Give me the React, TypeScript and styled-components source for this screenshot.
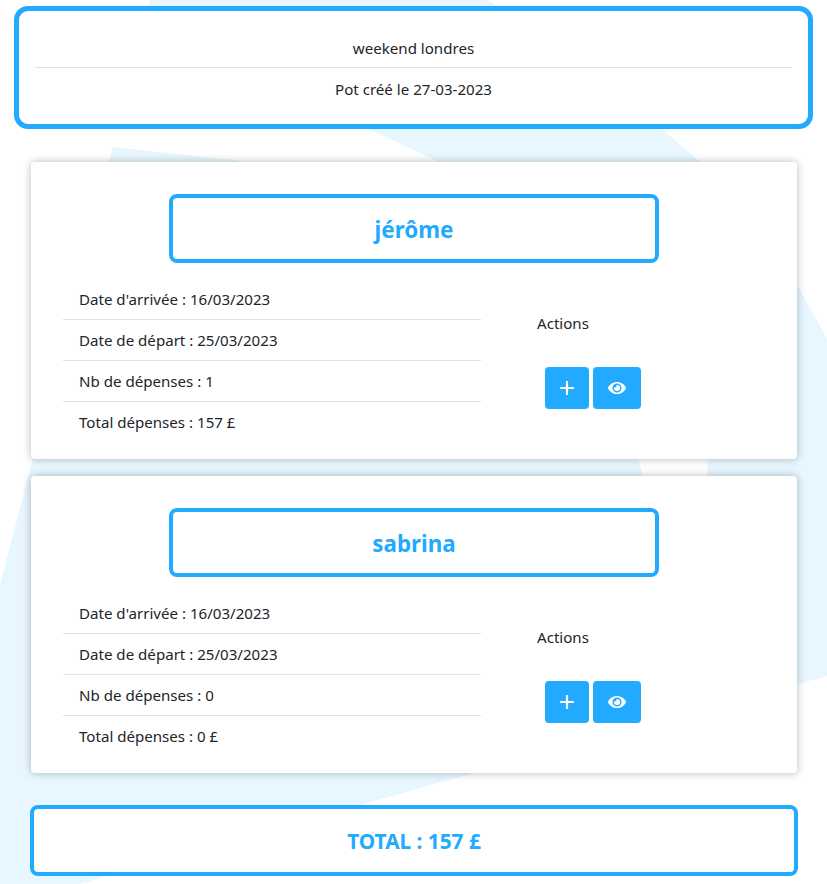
import React from "react";
import styled, { createGlobalStyle } from "styled-components";
import { FaEye } from "react-icons/fa";

const BLUE = "#22aaff";

const GlobalStyle = createGlobalStyle`
  html, body { margin: 0; padding: 0; background: #fff; }
  body {
    font-family: "Noto Sans", "Open Sans", sans-serif;
    font-size: 15.1px;
    line-height: 1.5;
    color: #212529;
  }
  * { box-sizing: border-box; }
`;

const Page = styled.div`
  position: relative;
  width: 827px;
  height: 884px;
  overflow: hidden;
  padding: 6px 14px 0;
`;

const Backdrop = styled.svg`
  position: absolute;
  inset: 0;
  width: 827px;
  height: 884px;
  z-index: 0;
`;

const Content = styled.div`
  position: relative;
  z-index: 1;
`;

const Header = styled.header`
  height: 123px;
  background: #fff;
  border: 5px solid ${BLUE};
  border-radius: 14px;
  padding: 15px 16px 0;
  text-align: center;
`;

const HeaderLine = styled.div`
  height: 41px;
  line-height: 45px;
  & + & { border-top: 1px solid #dee2e6; line-height: 42px; }
`;

const Cards = styled.main`
  margin: 33px 16px 0 17px;
  display: flex;
  flex-direction: column;
  gap: 17.5px;
`;

const Card = styled.section`
  height: 296.5px;
  background: #fff;
  border-radius: 4px;
  box-shadow: 0 0 8px rgba(0, 0, 0, 0.28);
  padding: 32px 32px 0;
`;

const NameBox = styled.h2`
  margin: 0 auto;
  width: 490px;
  height: 69px;
  border: 4px solid ${BLUE};
  border-radius: 8px;
  padding-top: 2px;
  display: flex;
  align-items: center;
  justify-content: center;
  font-size: 22.4px;
  line-height: 1.5;
  font-weight: 700;
  color: ${BLUE};
`;

const CardBody = styled.div`
  margin-top: 15px;
  display: flex;
`;

const InfoList = styled.ul`
  list-style: none;
  margin: 0;
  padding: 0;
  width: 418px;
`;

const InfoItem = styled.li`
  height: 41px;
  line-height: 43px;
  padding: 0 16px;
  & + & { border-top: 1px solid #dee2e6; line-height: 41px; }
`;

const ActionsCol = styled.div`
  margin-left: 56px;
  padding-top: 34px;
`;

const ActionsLabel = styled.div`
  line-height: 23px;
`;

const ActionButtons = styled.div`
  margin: 32px 0 0 8px;
  display: flex;
  gap: 4px;
`;

const IconButton = styled.button<{ $w: number }>`
  width: ${(p) => p.$w}px;
  height: 42px;
  border: 0;
  padding: 0;
  border-radius: 4px;
  background: ${BLUE};
  color: #fff;
  display: flex;
  align-items: center;
  justify-content: center;
`;

const TotalBox = styled.div`
  margin: 32.5px 15px 0 16px;
  height: 71px;
  background: #fff;
  border: 4px solid ${BLUE};
  border-radius: 8px;
  padding-top: 2px;
  display: flex;
  align-items: center;
  justify-content: center;
  font-size: 20.8px;
  font-weight: 700;
  color: ${BLUE};
`;

const PlusIcon = () => (
  <svg width="14" height="14" viewBox="0 0 14 14">
    <path d="M7 1v12M1 7h12" stroke="#fff" strokeWidth="2.2" strokeLinecap="round" />
  </svg>
);

type Person = { name: string; arrive: string; depart: string; count: number; total: string };

const people: Person[] = [
  { name: "jérôme", arrive: "16/03/2023", depart: "25/03/2023", count: 1, total: "157 £" },
  { name: "sabrina", arrive: "16/03/2023", depart: "25/03/2023", count: 0, total: "0 £" },
];

export default function App() {
  return (
    <Page>
      <GlobalStyle />
      <Backdrop viewBox="0 0 827 884">
        <path
          fill="#e7f6ff"
          d="M150 0H488L663 130L698 160L800 290L827 339V676L467 775L79 884H0V585L113 147L233 160L470 200L435 160L367 128L340 60H137Z"
        />
        <path fill="#fff" d="M634 440H708L707 490H646Z" />
      </Backdrop>
      <Content>
        <Header>
          <HeaderLine>weekend londres</HeaderLine>
          <HeaderLine>Pot créé le 27-03-2023</HeaderLine>
        </Header>
        <Cards>
          {people.map((p) => (
            <Card key={p.name}>
              <NameBox>{p.name}</NameBox>
              <CardBody>
                <InfoList>
                  <InfoItem>Date d'arrivée : {p.arrive}</InfoItem>
                  <InfoItem>Date de départ : {p.depart}</InfoItem>
                  <InfoItem>Nb de dépenses : {p.count}</InfoItem>
                  <InfoItem>Total dépenses : {p.total}</InfoItem>
                </InfoList>
                <ActionsCol>
                  <ActionsLabel>Actions</ActionsLabel>
                  <ActionButtons>
                    <IconButton $w={44} aria-label="Ajouter"><PlusIcon /></IconButton>
                    <IconButton $w={48} aria-label="Voir"><FaEye size={18} /></IconButton>
                  </ActionButtons>
                </ActionsCol>
              </CardBody>
            </Card>
          ))}
        </Cards>
        <TotalBox>TOTAL : 157 £</TotalBox>
      </Content>
    </Page>
  );
}
